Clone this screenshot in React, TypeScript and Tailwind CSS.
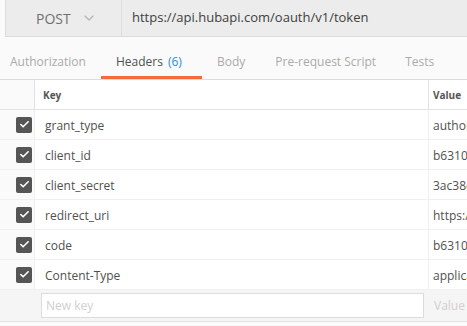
import { Check, ChevronDown } from 'lucide-react'

const headers = [
  { key: 'grant_type', value: 'authorization_code' },
  { key: 'client_id', value: 'b6310a4e-2f1c' },
  { key: 'client_secret', value: '3ac38d91-7e55' },
  { key: 'redirect_uri', value: 'https://localhost' },
  { key: 'code', value: 'b6310e52-94af' },
  { key: 'Content-Type', value: 'application/x-www-form-urlencoded' },
]

export default function App() {
  return (
    <div
      className="h-[326px] w-[467px] overflow-hidden bg-[#fafafa] text-[12px] text-[#505050]"
      style={{ fontFamily: '"Open Sans", "Noto Sans", sans-serif' }}
    >
      {/* request bar */}
      <div className="ml-[5px] flex h-[37px] border-b border-l border-[#dcdcdc] bg-[#ececec]">
        <div className="flex w-[116px] shrink-0 items-center gap-[10px] border-r border-[#dcdcdc] pl-[30px]">
          <span className="text-[14px] text-[#707070]">POST</span>
          <ChevronDown size={16} strokeWidth={1.6} className="text-[#b0b0b0]" />
        </div>
        <div className="flex items-center pl-[10px] text-[13px] text-[#404040]">
          https://api.hubapi.com/oauth/v1/token
        </div>
      </div>

      {/* tabs */}
      <div className="flex h-[43px] border-b border-[#dcdcdc] text-[12px]">
        <div className="flex w-[101px] items-center pl-[10px] pt-[8px] text-[#aaaaaa]">Authorization</div>
        <div className="relative flex w-[101px] items-center pl-[15px] pt-[8px] text-[#505050]">
          Headers <span className="ml-[5px] text-[#2a8ee8]">(6)</span>
          <div className="absolute bottom-0 left-0 right-0 h-[3px] bg-[#f26b3a]" />
        </div>
        <div className="flex items-center pl-[15px] pr-[30px] pt-[8px] text-[#aaaaaa]">Body</div>
        <div className="flex items-center pr-[29px] pt-[8px] text-[#aaaaaa]">Pre-request Script</div>
        <div className="flex items-center pt-[8px] text-[#aaaaaa]">Tests</div>
      </div>

      {/* table */}
      <div className="grid grid-cols-[35px_394px_200px] bg-white">
        <div className="h-[30px] border-b border-r border-[#e2e2e2] bg-[#fafafa]" />
        <div className="flex h-[30px] items-center border-b border-r border-[#e2e2e2] pl-[8px] pt-[1px] text-[10px] font-bold text-[#555]">
          Key
        </div>
        <div className="flex h-[30px] items-center border-b border-[#e2e2e2] pl-[4px] pt-[1px] text-[10px] font-bold text-[#555]">
          Value
        </div>

        {headers.map((h) => (
          <Row key={h.key} k={h.key} v={h.value} />
        ))}

        <div className="h-[32px] border-b border-[#e2e2e2] bg-[#f5f5f5]" />
        <div className="flex h-[32px] items-center border-b border-[#e2e2e2] bg-[#f5f5f5] pl-[6px] pr-[5px]">
          <div className="flex h-[25px] w-full items-center border border-[#dcdcdc] bg-white pl-[4px] text-[#cfcfcf]">
            New key
          </div>
        </div>
        <div className="flex h-[32px] items-center border-b border-[#e2e2e2] bg-[#f5f5f5] pl-[5px] text-[#cfcfcf]">
          Value
        </div>
      </div>
    </div>
  )
}

function Row({ k, v }: { k: string; v: string }) {
  return (
    <>
      <div className="flex h-[30px] items-center justify-end border-b border-r border-[#f0f0f0] bg-[#fafafa] pr-[2px]">
        <span className="flex h-[16px] w-[16px] items-center justify-center rounded-[2px] bg-[#555555]">
          <Check size={11} strokeWidth={3.5} className="text-white" />
        </span>
      </div>
      <div className="flex h-[30px] items-center border-b border-r border-[#f0f0f0] pl-[10px] pt-[2px]">{k}</div>
      <div className="flex h-[30px] items-center whitespace-nowrap border-b border-[#f0f0f0] pl-[4px] pt-[2px]">{v}</div>
    </>
  )
}
